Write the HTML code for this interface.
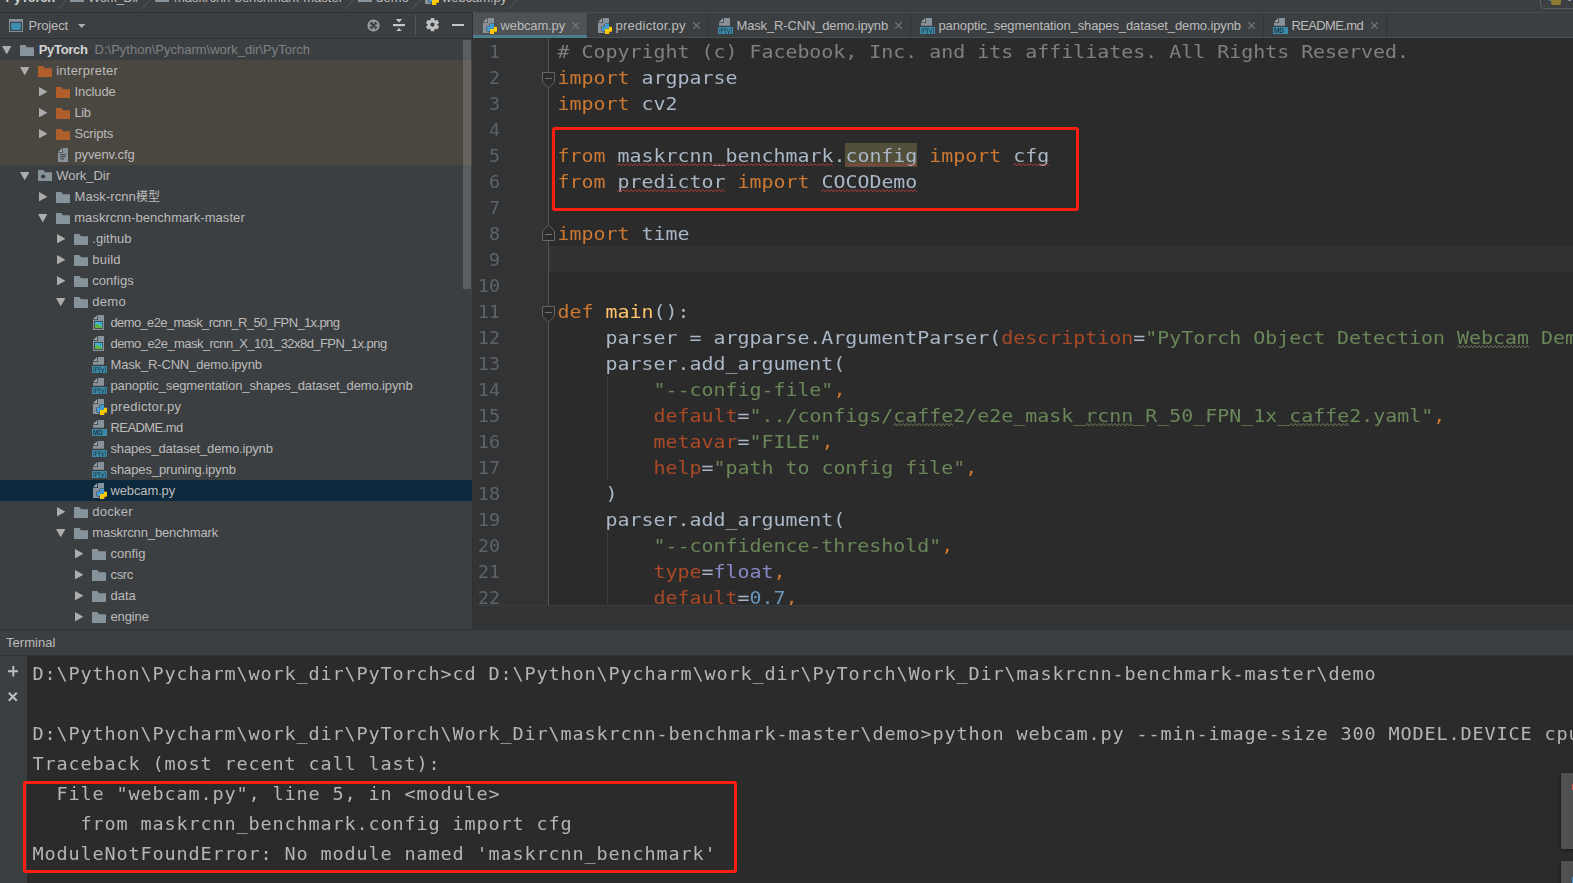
<!DOCTYPE html>
<html lang="en"><head><meta charset="utf-8"><title>PyCharm - webcam.py</title>
<style>
*{box-sizing:border-box}
html,body{margin:0;padding:0}
body{width:1573px;height:883px;overflow:hidden;background:#3c3f41;position:relative;font-family:"Liberation Sans", "Noto Sans CJK SC", sans-serif;font-size:13px;color:#bbbbbb;line-height:21px}
.abs{position:absolute}
.t{position:absolute;white-space:pre;}
.ic{position:absolute;display:block}
#top{position:absolute;left:0;top:0;width:1573px;height:12px;background:#3c3f41;overflow:hidden}
#proj{position:absolute;left:0;top:13px;width:472px;height:616px;background:#3c3f41;overflow:hidden}
.row{position:absolute;left:0;width:472px;height:21px}
.arr{position:absolute;display:block}
#tabs{position:absolute;left:472px;top:13px;width:1101px;height:25px;background:#3c3f41;overflow:hidden}
#ed{position:absolute;left:472px;top:38px;width:1101px;height:567px;background:#2b2b2b;overflow:hidden}
#gut{position:absolute;left:0;top:0;width:76px;height:567px;background:#313335}
.ln{position:absolute;left:0;width:28px;text-align:right;color:#606366}
.code{font-family:"DejaVu Sans Mono","Liberation Mono",monospace;font-size:19.93px;line-height:26px;white-space:pre;color:#a9b7c6}
.cl{transform:scaleY(0.89);transform-origin:0 19.9px}
.ln{transform:scale(0.92,0.89);transform-origin:100% 19.9px}
.cl{position:absolute;left:85.5px;height:26px}
.k{color:#cc7832} .c{color:#808080} .s{color:#6a8759} .n{color:#6897bb} .p{color:#aa4926} .b{color:#8888c6} .f{color:#ffc66d}
.gs{will-change:transform}
#crumb{position:absolute;left:472px;top:605px;width:1101px;height:24px;background:#313335}
#term{position:absolute;left:0;top:629px;width:1573px;height:254px;background:#2b2b2b;overflow:hidden}
.tl{position:absolute;left:32.5px;font-family:"DejaVu Sans Mono","Liberation Mono",monospace;font-size:18.5px;letter-spacing:0.862px;line-height:30px;height:30px;white-space:pre;color:#b5b5b5}
</style></head>
<body>
<div id="top"><span class="t" style="left:5.5px;top:-10px;line-height:15px;font-weight:bold;color:#cfcfcf;"><span style="letter-spacing:-0.223px">PyTorch</span></span><svg class="ic" style="left:56.7px;top:-3.4px" width="13" height="12" viewBox="0 0 13 12"><path d="M12.5 0L0.5 12" stroke="#56595b" stroke-width="1" fill="none"/></svg><svg class="ic" style="left:140.7px;top:-3.4px" width="13" height="12" viewBox="0 0 13 12"><path d="M12.5 0L0.5 12" stroke="#56595b" stroke-width="1" fill="none"/></svg><svg class="ic" style="left:344.2px;top:-3.4px" width="13" height="12" viewBox="0 0 13 12"><path d="M12.5 0L0.5 12" stroke="#56595b" stroke-width="1" fill="none"/></svg><svg class="ic" style="left:410.7px;top:-3.4px" width="13" height="12" viewBox="0 0 13 12"><path d="M12.5 0L0.5 12" stroke="#56595b" stroke-width="1" fill="none"/></svg><svg class="ic" style="left:508.2px;top:-3.4px" width="13" height="12" viewBox="0 0 13 12"><path d="M12.5 0L0.5 12" stroke="#56595b" stroke-width="1" fill="none"/></svg><svg class="ic" style="left:69.5px;top:-9px" width="14" height="11" viewBox="0 0 14 11"><path d="M0 0h5.2l1.6 2H14v9H0z" fill="#87939a"/></svg><svg class="ic" style="left:155px;top:-9px" width="14" height="11" viewBox="0 0 14 11"><path d="M0 0h5.2l1.6 2H14v9H0z" fill="#87939a"/></svg><svg class="ic" style="left:358px;top:-9px" width="14" height="11" viewBox="0 0 14 11"><path d="M0 0h5.2l1.6 2H14v9H0z" fill="#87939a"/></svg><span class="t" style="left:88px;top:-10px;line-height:15px;"><span style="letter-spacing:-0.367px">Work_Dir</span></span><span class="t" style="left:174px;top:-10px;line-height:15px;"><span style="letter-spacing:-0.002px">maskrcnn-benchmark-master</span></span><span class="t" style="left:376px;top:-10px;line-height:15px;"><span style="letter-spacing:0.117px">demo</span></span><span class="abs" style="left:425px;top:-11.5px;width:15px;height:16px"><svg class="ic" width="14" height="16.2" viewBox="0 0 14 16.2"><path d="M5.0 0H11V15H0V5.0H5.0z" fill="#87929a"/><path d="M0 4.2L4.2 0V4.2z" fill="#9ba5ab"/><path d="M7.6 5.8H10.3Q11 5.8 11 6.5V10Q11 10.7 10.3 10.7H7.7Q7 10.7 7 11.4V12.2Q7 12.85 6.3 12.85H4.7Q4 12.85 4 12.15V9.5Q4 8.8 4.7 8.8H7V8.3H7V6.5Q7 5.8 7.6 5.8z" fill="#3f9fd6" stroke="#3a4044" stroke-width="1.2" paint-order="stroke"/><path d="M11 8.8H13.3Q14 8.8 14 9.5V13Q14 13.7 13.3 13.7H11.3V15.4Q11.3 16.1 10.6 16.1H7.7Q7 16.1 7 15.4V11.4Q7 10.7 7.7 10.7H10.3Q11 10.7 11 10z" fill="#ffcc00" stroke="#3a4044" stroke-width="1.2" paint-order="stroke"/><path d="M7.6 5.8H10.3Q11 5.8 11 6.5V10Q11 10.7 10.3 10.7H7.7Q7 10.7 7 11.4V12.2Q7 12.85 6.3 12.85H4.7Q4 12.85 4 12.15V9.5Q4 8.8 4.7 8.8H7V8.3H7V6.5Q7 5.8 7.6 5.8z" fill="#3f9fd6"/><circle cx="8.4" cy="7.1" r="0.45" fill="#2a6e98"/><circle cx="9.9" cy="14.7" r="0.45" fill="#b38f00"/></svg></span><span class="t" style="left:442px;top:-10px;line-height:15px;"><span style="letter-spacing:-0.083px">webcam.py</span></span><div class="abs" style="left:1539.5px;top:-14px;width:60px;height:22.5px;border:1px solid #5a5d5f;border-radius:4px;background:#3c3f41"></div><div class="abs" style="left:1548px;top:-2px;width:10px;height:3px;background:#3d7fa8;border-radius:0 0 0 2px"></div><div class="abs" style="left:1551px;top:0px;width:10px;height:5px;background:#8c7a30;border-radius:0 0 2px 2px"></div><span class="t" style="left:1567px;top:-11px;line-height:15px;color:#cfd2d4">w</span></div>
<div class="abs" style="left:0;top:12px;width:472px;height:1px;background:#2f3133"></div><div class="abs" style="left:472px;top:12px;width:1101px;height:1px;background:#474b4d"></div>
<div id="proj"><svg class="ic" style="left:9px;top:6px" width="14" height="13" viewBox="0 0 14 13"><rect x="0" y="0" width="14" height="13" fill="#87939a"/><rect x="1" y="2.8" width="12" height="9.2" fill="#3c3f41"/><rect x="2.1" y="3.9" width="9.8" height="7.1" fill="#3c8eb0"/></svg><span class="t" style="left:28.5px;top:2px;line-height:21px"><span style="letter-spacing:-0.138px">Project</span></span><svg class="ic" style="left:78px;top:11px" width="7.4" height="4" viewBox="0 0 7.4 4"><path d="M0 0h7.4L3.7 4z" fill="#adadad"/></svg><svg class="ic" style="left:366.5px;top:5.5px" width="13" height="13" viewBox="0 0 13 13"><circle cx="6.5" cy="6.5" r="5.2" fill="none" stroke="#9c9ea0" stroke-width="1.8"/><path d="M6.5 1v3.6M6.5 8.4V12M1 6.5h3.6M8.4 6.5H12" stroke="#9c9ea0" stroke-width="2"/></svg><svg class="ic" style="left:393px;top:6px" width="12" height="12.4" viewBox="0 0 12 12.4"><rect x="0" y="5" width="12" height="2.2" fill="#c4c4c4"/><path d="M2.8 0h6.4L6 3.4z" fill="#c4c4c4"/><path d="M2.8 12.4h6.4L6 9z" fill="#c4c4c4"/></svg><div class="abs" style="left:415px;top:2px;width:1px;height:20px;background:#555759"></div><svg class="ic" style="left:425.5px;top:5.3px" width="13" height="13.4" viewBox="-6.5 -6.7 13 13.4"><g fill="#c0c0c0"><circle r="4.9"/><rect x="-1.9" y="-6.6" width="3.8" height="3.4" rx="0.7" transform="rotate(0)"/><rect x="-1.9" y="-6.6" width="3.8" height="3.4" rx="0.7" transform="rotate(60)"/><rect x="-1.9" y="-6.6" width="3.8" height="3.4" rx="0.7" transform="rotate(120)"/><rect x="-1.9" y="-6.6" width="3.8" height="3.4" rx="0.7" transform="rotate(180)"/><rect x="-1.9" y="-6.6" width="3.8" height="3.4" rx="0.7" transform="rotate(240)"/><rect x="-1.9" y="-6.6" width="3.8" height="3.4" rx="0.7" transform="rotate(300)"/></g><circle r="2.1" fill="#3c3f41"/></svg><div class="abs" style="left:452px;top:10.9px;width:12.2px;height:2.3px;background:#c4c4c4"></div><div class="abs" style="left:0;top:25px;width:472px;height:1px;background:#2f3133"></div><div class="abs" style="left:0;top:47px;width:472px;height:105px;background:#4a4740"></div><div class="abs" style="left:0;top:467px;width:472px;height:21px;background:#0d293e"></div><div class="row" style="top:26px"><svg class="arr" style="left:1.8px;top:6.6px" width="9.4" height="8.4" viewBox="0 0 9.4 8.4"><path d="M0 0h9.4L4.7 8.4z" fill="#adadad"/></svg><span class="abs" style="left:20px;top:5.5px"><svg class="ic" width="14" height="11" viewBox="0 0 14 11"><path d="M0 0h5.3l1.7 2.3H14V11H0z" fill="#87939a"/></svg></span><span class="t" style="left:38.75px;top:0;font-weight:bold;color:#d4d4d4;"><span style="letter-spacing:-0.33px">PyTorch</span></span><span class="t" style="left:94.5px;top:0;color:#7f8183"><span style="letter-spacing:0.006px">D:\Python\Pycharm\work_dir\PyTorch</span></span></div><div class="row" style="top:47px"><svg class="arr" style="left:19.8px;top:6.6px" width="9.4" height="8.4" viewBox="0 0 9.4 8.4"><path d="M0 0h9.4L4.7 8.4z" fill="#adadad"/></svg><span class="abs" style="left:38px;top:5.5px"><svg class="ic" width="14" height="11" viewBox="0 0 14 11"><path d="M0 0h5.3l1.7 2.3H14V11H0z" fill="#b15e2d"/></svg></span><span class="t" style="left:56.25px;top:0;"><span style="letter-spacing:0.227px">interpreter</span></span></div><div class="row" style="top:68px"><svg class="arr" style="left:38.8px;top:5.8px" width="8.4" height="9.4" viewBox="0 0 8.4 9.4"><path d="M0 0L8.4 4.7 0 9.4z" fill="#adadad"/></svg><span class="abs" style="left:56px;top:5.5px"><svg class="ic" width="14" height="11" viewBox="0 0 14 11"><path d="M0 0h5.3l1.7 2.3H14V11H0z" fill="#b15e2d"/></svg></span><span class="t" style="left:74.5px;top:0;"><span style="letter-spacing:-0.096px">Include</span></span></div><div class="row" style="top:89px"><svg class="arr" style="left:38.8px;top:5.8px" width="8.4" height="9.4" viewBox="0 0 8.4 9.4"><path d="M0 0L8.4 4.7 0 9.4z" fill="#adadad"/></svg><span class="abs" style="left:56px;top:5.5px"><svg class="ic" width="14" height="11" viewBox="0 0 14 11"><path d="M0 0h5.3l1.7 2.3H14V11H0z" fill="#b15e2d"/></svg></span><span class="t" style="left:74.5px;top:0;"><span style="letter-spacing:-0.453px">Lib</span></span></div><div class="row" style="top:110px"><svg class="arr" style="left:38.8px;top:5.8px" width="8.4" height="9.4" viewBox="0 0 8.4 9.4"><path d="M0 0L8.4 4.7 0 9.4z" fill="#adadad"/></svg><span class="abs" style="left:56px;top:5.5px"><svg class="ic" width="14" height="11" viewBox="0 0 14 11"><path d="M0 0h5.3l1.7 2.3H14V11H0z" fill="#b15e2d"/></svg></span><span class="t" style="left:74.5px;top:0;"><span style="letter-spacing:-0.176px">Scripts</span></span></div><div class="row" style="top:131px"><span class="abs" style="left:58px;top:4px"><svg class="ic" width="10" height="14" viewBox="0 0 10 14"><path d="M5.0 0H10V14H0V5.0H5.0z" fill="#87929a"/><path d="M0 4.2L4.2 0V4.2z" fill="#9ba5ab"/><path d="M2 6.6h6M2 8.7h6M2 10.9h4" stroke="#3c3f41" stroke-width="1"/></svg></span><span class="t" style="left:74.5px;top:0;"><span style="letter-spacing:-0.119px">pyvenv.cfg</span></span></div><div class="row" style="top:152px"><svg class="arr" style="left:19.8px;top:6.6px" width="9.4" height="8.4" viewBox="0 0 9.4 8.4"><path d="M0 0h9.4L4.7 8.4z" fill="#adadad"/></svg><span class="abs" style="left:38px;top:4.9px"><svg class="ic" width="14" height="11" viewBox="0 0 14 11"><path d="M0 0h5.3l1.7 2.3H14V11H0z" fill="#87939a"/><ellipse cx="5.1" cy="6.4" rx="2.2" ry="2" fill="#3c3f41"/></svg></span><span class="t" style="left:56.25px;top:0;"><span style="letter-spacing:-0.023px">Work_Dir</span></span></div><div class="row" style="top:173px"><svg class="arr" style="left:38.8px;top:5.8px" width="8.4" height="9.4" viewBox="0 0 8.4 9.4"><path d="M0 0L8.4 4.7 0 9.4z" fill="#adadad"/></svg><span class="abs" style="left:56px;top:5.5px"><svg class="ic" width="14" height="11" viewBox="0 0 14 11"><path d="M0 0h5.3l1.7 2.3H14V11H0z" fill="#87939a"/></svg></span><span class="t" style="left:74.5px;top:0;"><span style="letter-spacing:0.079px">Mask-rcnn</span><span style="font-size:12px">模型</span></span></div><div class="row" style="top:194px"><svg class="arr" style="left:37.8px;top:6.6px" width="9.4" height="8.4" viewBox="0 0 9.4 8.4"><path d="M0 0h9.4L4.7 8.4z" fill="#adadad"/></svg><span class="abs" style="left:56px;top:5.5px"><svg class="ic" width="14" height="11" viewBox="0 0 14 11"><path d="M0 0h5.3l1.7 2.3H14V11H0z" fill="#87939a"/></svg></span><span class="t" style="left:74.2px;top:0;"><span style="letter-spacing:0.062px">maskrcnn-benchmark-master</span></span></div><div class="row" style="top:215px"><svg class="arr" style="left:56.8px;top:5.8px" width="8.4" height="9.4" viewBox="0 0 8.4 9.4"><path d="M0 0L8.4 4.7 0 9.4z" fill="#adadad"/></svg><span class="abs" style="left:74px;top:5.5px"><svg class="ic" width="14" height="11" viewBox="0 0 14 11"><path d="M0 0h5.3l1.7 2.3H14V11H0z" fill="#87939a"/></svg></span><span class="t" style="left:92.3px;top:0;"><span style="letter-spacing:0.022px">.github</span></span></div><div class="row" style="top:236px"><svg class="arr" style="left:56.8px;top:5.8px" width="8.4" height="9.4" viewBox="0 0 8.4 9.4"><path d="M0 0L8.4 4.7 0 9.4z" fill="#adadad"/></svg><span class="abs" style="left:74px;top:5.5px"><svg class="ic" width="14" height="11" viewBox="0 0 14 11"><path d="M0 0h5.3l1.7 2.3H14V11H0z" fill="#87939a"/></svg></span><span class="t" style="left:92.3px;top:0;"><span style="letter-spacing:0.206px">build</span></span></div><div class="row" style="top:257px"><svg class="arr" style="left:56.8px;top:5.8px" width="8.4" height="9.4" viewBox="0 0 8.4 9.4"><path d="M0 0L8.4 4.7 0 9.4z" fill="#adadad"/></svg><span class="abs" style="left:74px;top:5.5px"><svg class="ic" width="14" height="11" viewBox="0 0 14 11"><path d="M0 0h5.3l1.7 2.3H14V11H0z" fill="#87939a"/></svg></span><span class="t" style="left:92.3px;top:0;"><span style="letter-spacing:0.028px">configs</span></span></div><div class="row" style="top:278px"><svg class="arr" style="left:55.8px;top:6.6px" width="9.4" height="8.4" viewBox="0 0 9.4 8.4"><path d="M0 0h9.4L4.7 8.4z" fill="#adadad"/></svg><span class="abs" style="left:74px;top:5.5px"><svg class="ic" width="14" height="11" viewBox="0 0 14 11"><path d="M0 0h5.3l1.7 2.3H14V11H0z" fill="#87939a"/></svg></span><span class="t" style="left:92.3px;top:0;"><span style="letter-spacing:0.267px">demo</span></span></div><div class="row" style="top:299px"><span class="abs" style="left:93px;top:3px"><svg class="ic" width="11" height="15" viewBox="0 0 11 15"><path d="M5.0 0H11V15H0V5.0H5.0z" fill="#87929a"/><path d="M0 4.2L4.2 0V4.2z" fill="#9ba5ab"/><rect x="1.2" y="6.1" width="8.7" height="7.6" fill="#35383a"/><rect x="2" y="6.9" width="7.3" height="6.1" fill="#40b6e0"/><path d="M2 13v-2.6c1-1.3 2.3-1.7 3.4-.9 1.300000000000001.9 2.6 1.7 3.9 2.3V13z" fill="#62b543"/><circle cx="7.5" cy="8.4" r="0.65" fill="#2f6f8c"/></svg></span><span class="t" style="left:110.5px;top:0;"><span style="letter-spacing:-0.625px">demo_e2e_mask_rcnn_R_50_FPN_1x.png</span></span></div><div class="row" style="top:320px"><span class="abs" style="left:93px;top:3px"><svg class="ic" width="11" height="15" viewBox="0 0 11 15"><path d="M5.0 0H11V15H0V5.0H5.0z" fill="#87929a"/><path d="M0 4.2L4.2 0V4.2z" fill="#9ba5ab"/><rect x="1.2" y="6.1" width="8.7" height="7.6" fill="#35383a"/><rect x="2" y="6.9" width="7.3" height="6.1" fill="#40b6e0"/><path d="M2 13v-2.6c1-1.3 2.3-1.7 3.4-.9 1.300000000000001.9 2.6 1.7 3.9 2.3V13z" fill="#62b543"/><circle cx="7.5" cy="8.4" r="0.65" fill="#2f6f8c"/></svg></span><span class="t" style="left:110.5px;top:0;"><span style="letter-spacing:-0.564px">demo_e2e_mask_rcnn_X_101_32x8d_FPN_1x.png</span></span></div><div class="row" style="top:341px"><span class="abs" style="left:92px;top:3px"><svg class="ic gs" width="15" height="16.2" viewBox="0 0 15 16.2"><g transform="translate(1,0)"><path d="M5.0 0H11V7.8H0V5.0H5.0z" fill="#87929a"/><path d="M0 4.2L4.2 0V4.2z" fill="#9ba5ab"/></g><rect x="0" y="9" width="15" height="7.1" fill="#3d89a8"/><text x="7.5" y="15.2" font-family="Liberation Sans, sans-serif" font-size="7" text-anchor="middle" fill="#1d3440" textLength="13" lengthAdjust="spacingAndGlyphs">IP[y]</text></svg></span><span class="t" style="left:110.5px;top:0;"><span style="letter-spacing:-0.158px">Mask_R-CNN_demo.ipynb</span></span></div><div class="row" style="top:362px"><span class="abs" style="left:92px;top:3px"><svg class="ic gs" width="15" height="16.2" viewBox="0 0 15 16.2"><g transform="translate(1,0)"><path d="M5.0 0H11V7.8H0V5.0H5.0z" fill="#87929a"/><path d="M0 4.2L4.2 0V4.2z" fill="#9ba5ab"/></g><rect x="0" y="9" width="15" height="7.1" fill="#3d89a8"/><text x="7.5" y="15.2" font-family="Liberation Sans, sans-serif" font-size="7" text-anchor="middle" fill="#1d3440" textLength="13" lengthAdjust="spacingAndGlyphs">IP[y]</text></svg></span><span class="t" style="left:110.5px;top:0;"><span style="letter-spacing:-0.124px">panoptic_segmentation_shapes_dataset_demo.ipynb</span></span></div><div class="row" style="top:383px"><span class="abs" style="left:93px;top:3px"><svg class="ic" width="14" height="16.2" viewBox="0 0 14 16.2"><path d="M5.0 0H11V15H0V5.0H5.0z" fill="#87929a"/><path d="M0 4.2L4.2 0V4.2z" fill="#9ba5ab"/><path d="M7.6 5.8H10.3Q11 5.8 11 6.5V10Q11 10.7 10.3 10.7H7.7Q7 10.7 7 11.4V12.2Q7 12.85 6.3 12.85H4.7Q4 12.85 4 12.15V9.5Q4 8.8 4.7 8.8H7V8.3H7V6.5Q7 5.8 7.6 5.8z" fill="#3f9fd6" stroke="#3a4044" stroke-width="1.2" paint-order="stroke"/><path d="M11 8.8H13.3Q14 8.8 14 9.5V13Q14 13.7 13.3 13.7H11.3V15.4Q11.3 16.1 10.6 16.1H7.7Q7 16.1 7 15.4V11.4Q7 10.7 7.7 10.7H10.3Q11 10.7 11 10z" fill="#ffcc00" stroke="#3a4044" stroke-width="1.2" paint-order="stroke"/><path d="M7.6 5.8H10.3Q11 5.8 11 6.5V10Q11 10.7 10.3 10.7H7.7Q7 10.7 7 11.4V12.2Q7 12.85 6.3 12.85H4.7Q4 12.85 4 12.15V9.5Q4 8.8 4.7 8.8H7V8.3H7V6.5Q7 5.8 7.6 5.8z" fill="#3f9fd6"/><circle cx="8.4" cy="7.1" r="0.45" fill="#2a6e98"/><circle cx="9.9" cy="14.7" r="0.45" fill="#b38f00"/></svg></span><span class="t" style="left:110.5px;top:0;"><span style="letter-spacing:0.3px">predictor.py</span></span></div><div class="row" style="top:404px"><span class="abs" style="left:92px;top:3px"><svg class="ic gs" width="15" height="16.2" viewBox="0 0 15 16.2"><g transform="translate(1,0)"><path d="M5.0 0H11V7.8H0V5.0H5.0z" fill="#87929a"/><path d="M0 4.2L4.2 0V4.2z" fill="#9ba5ab"/></g><rect x="0" y="9" width="15" height="7.1" fill="#3d89a8"/><text x="6" y="15.2" font-family="Liberation Sans, sans-serif" font-size="6.6" font-weight="bold" text-anchor="middle" fill="#1d3440" textLength="10" lengthAdjust="spacingAndGlyphs">MD</text></svg></span><span class="t" style="left:110.5px;top:0;"><span style="letter-spacing:-0.566px">README.md</span></span></div><div class="row" style="top:425px"><span class="abs" style="left:92px;top:3px"><svg class="ic gs" width="15" height="16.2" viewBox="0 0 15 16.2"><g transform="translate(1,0)"><path d="M5.0 0H11V7.8H0V5.0H5.0z" fill="#87929a"/><path d="M0 4.2L4.2 0V4.2z" fill="#9ba5ab"/></g><rect x="0" y="9" width="15" height="7.1" fill="#3d89a8"/><text x="7.5" y="15.2" font-family="Liberation Sans, sans-serif" font-size="7" text-anchor="middle" fill="#1d3440" textLength="13" lengthAdjust="spacingAndGlyphs">IP[y]</text></svg></span><span class="t" style="left:110.5px;top:0;"><span style="letter-spacing:-0.161px">shapes_dataset_demo.ipynb</span></span></div><div class="row" style="top:446px"><span class="abs" style="left:92px;top:3px"><svg class="ic gs" width="15" height="16.2" viewBox="0 0 15 16.2"><g transform="translate(1,0)"><path d="M5.0 0H11V7.8H0V5.0H5.0z" fill="#87929a"/><path d="M0 4.2L4.2 0V4.2z" fill="#9ba5ab"/></g><rect x="0" y="9" width="15" height="7.1" fill="#3d89a8"/><text x="7.5" y="15.2" font-family="Liberation Sans, sans-serif" font-size="7" text-anchor="middle" fill="#1d3440" textLength="13" lengthAdjust="spacingAndGlyphs">IP[y]</text></svg></span><span class="t" style="left:110.5px;top:0;"><span style="letter-spacing:-0.096px">shapes_pruning.ipynb</span></span></div><div class="row" style="top:467px"><span class="abs" style="left:93px;top:3px"><svg class="ic" width="14" height="16.2" viewBox="0 0 14 16.2"><path d="M5.0 0H11V15H0V5.0H5.0z" fill="#87929a"/><path d="M0 4.2L4.2 0V4.2z" fill="#9ba5ab"/><path d="M7.6 5.8H10.3Q11 5.8 11 6.5V10Q11 10.7 10.3 10.7H7.7Q7 10.7 7 11.4V12.2Q7 12.85 6.3 12.85H4.7Q4 12.85 4 12.15V9.5Q4 8.8 4.7 8.8H7V8.3H7V6.5Q7 5.8 7.6 5.8z" fill="#3f9fd6" stroke="#3a4044" stroke-width="1.2" paint-order="stroke"/><path d="M11 8.8H13.3Q14 8.8 14 9.5V13Q14 13.7 13.3 13.7H11.3V15.4Q11.3 16.1 10.6 16.1H7.7Q7 16.1 7 15.4V11.4Q7 10.7 7.7 10.7H10.3Q11 10.7 11 10z" fill="#ffcc00" stroke="#3a4044" stroke-width="1.2" paint-order="stroke"/><path d="M7.6 5.8H10.3Q11 5.8 11 6.5V10Q11 10.7 10.3 10.7H7.7Q7 10.7 7 11.4V12.2Q7 12.85 6.3 12.85H4.7Q4 12.85 4 12.15V9.5Q4 8.8 4.7 8.8H7V8.3H7V6.5Q7 5.8 7.6 5.8z" fill="#3f9fd6"/><circle cx="8.4" cy="7.1" r="0.45" fill="#2a6e98"/><circle cx="9.9" cy="14.7" r="0.45" fill="#b38f00"/></svg></span><span class="t" style="left:110.5px;top:0;"><span style="letter-spacing:-0.128px">webcam.py</span></span></div><div class="row" style="top:488px"><svg class="arr" style="left:56.8px;top:5.8px" width="8.4" height="9.4" viewBox="0 0 8.4 9.4"><path d="M0 0L8.4 4.7 0 9.4z" fill="#adadad"/></svg><span class="abs" style="left:74px;top:5.5px"><svg class="ic" width="14" height="11" viewBox="0 0 14 11"><path d="M0 0h5.3l1.7 2.3H14V11H0z" fill="#87939a"/></svg></span><span class="t" style="left:92.3px;top:0;"><span style="letter-spacing:0.261px">docker</span></span></div><div class="row" style="top:509px"><svg class="arr" style="left:55.8px;top:6.6px" width="9.4" height="8.4" viewBox="0 0 9.4 8.4"><path d="M0 0h9.4L4.7 8.4z" fill="#adadad"/></svg><span class="abs" style="left:74px;top:5.5px"><svg class="ic" width="14" height="11" viewBox="0 0 14 11"><path d="M0 0h5.3l1.7 2.3H14V11H0z" fill="#87939a"/></svg></span><span class="t" style="left:92.3px;top:0;"><span style="letter-spacing:-0.111px">maskrcnn_benchmark</span></span></div><div class="row" style="top:530px"><svg class="arr" style="left:74.8px;top:5.8px" width="8.4" height="9.4" viewBox="0 0 8.4 9.4"><path d="M0 0L8.4 4.7 0 9.4z" fill="#adadad"/></svg><span class="abs" style="left:92px;top:5.5px"><svg class="ic" width="14" height="11" viewBox="0 0 14 11"><path d="M0 0h5.3l1.7 2.3H14V11H0z" fill="#87939a"/></svg></span><span class="t" style="left:110.5px;top:0;"><span style="letter-spacing:0.049px">config</span></span></div><div class="row" style="top:551px"><svg class="arr" style="left:74.8px;top:5.8px" width="8.4" height="9.4" viewBox="0 0 8.4 9.4"><path d="M0 0L8.4 4.7 0 9.4z" fill="#adadad"/></svg><span class="abs" style="left:92px;top:5.5px"><svg class="ic" width="14" height="11" viewBox="0 0 14 11"><path d="M0 0h5.3l1.7 2.3H14V11H0z" fill="#87939a"/></svg></span><span class="t" style="left:110.5px;top:0;"><span style="letter-spacing:-0.361px">csrc</span></span></div><div class="row" style="top:572px"><svg class="arr" style="left:74.8px;top:5.8px" width="8.4" height="9.4" viewBox="0 0 8.4 9.4"><path d="M0 0L8.4 4.7 0 9.4z" fill="#adadad"/></svg><span class="abs" style="left:92px;top:5.5px"><svg class="ic" width="14" height="11" viewBox="0 0 14 11"><path d="M0 0h5.3l1.7 2.3H14V11H0z" fill="#87939a"/></svg></span><span class="t" style="left:110.5px;top:0;"><span style="letter-spacing:-0.028px">data</span></span></div><div class="row" style="top:593px"><svg class="arr" style="left:74.8px;top:5.8px" width="8.4" height="9.4" viewBox="0 0 8.4 9.4"><path d="M0 0L8.4 4.7 0 9.4z" fill="#adadad"/></svg><span class="abs" style="left:92px;top:5.5px"><svg class="ic" width="14" height="11" viewBox="0 0 14 11"><path d="M0 0h5.3l1.7 2.3H14V11H0z" fill="#87939a"/></svg></span><span class="t" style="left:110.5px;top:0;"><span style="letter-spacing:-0.124px">engine</span></span></div><div class="abs" style="left:463px;top:27px;width:8px;height:248.5px;background:rgba(172,172,172,0.286)"></div></div>
<div class="abs" style="left:472px;top:13px;width:1px;height:616px;background:#2d2f31;z-index:3"></div>
<div id="tabs"><div class="abs" style="left:1px;top:0;width:114px;height:25px;background:#4e5254"></div><div class="abs" style="left:1px;top:22px;width:114px;height:3px;background:#4a7d8e"></div><div class="abs" style="left:115px;top:0;width:1px;height:25px;background:#323537"></div><span class="abs" style="left:11.199999999999989px;top:5px"><svg class="ic" width="14" height="16.2" viewBox="0 0 14 16.2"><path d="M5.0 0H11V15H0V5.0H5.0z" fill="#87929a"/><path d="M0 4.2L4.2 0V4.2z" fill="#9ba5ab"/><path d="M7.6 5.8H10.3Q11 5.8 11 6.5V10Q11 10.7 10.3 10.7H7.7Q7 10.7 7 11.4V12.2Q7 12.85 6.3 12.85H4.7Q4 12.85 4 12.15V9.5Q4 8.8 4.7 8.8H7V8.3H7V6.5Q7 5.8 7.6 5.8z" fill="#3f9fd6" stroke="#3a4044" stroke-width="1.2" paint-order="stroke"/><path d="M11 8.8H13.3Q14 8.8 14 9.5V13Q14 13.7 13.3 13.7H11.3V15.4Q11.3 16.1 10.6 16.1H7.7Q7 16.1 7 15.4V11.4Q7 10.7 7.7 10.7H10.3Q11 10.7 11 10z" fill="#ffcc00" stroke="#3a4044" stroke-width="1.2" paint-order="stroke"/><path d="M7.6 5.8H10.3Q11 5.8 11 6.5V10Q11 10.7 10.3 10.7H7.7Q7 10.7 7 11.4V12.2Q7 12.85 6.3 12.85H4.7Q4 12.85 4 12.15V9.5Q4 8.8 4.7 8.8H7V8.3H7V6.5Q7 5.8 7.6 5.8z" fill="#3f9fd6"/><circle cx="8.4" cy="7.1" r="0.45" fill="#2a6e98"/><circle cx="9.9" cy="14.7" r="0.45" fill="#b38f00"/></svg></span><span class="t" style="left:28.600000000000023px;top:2px;line-height:21px"><span style="letter-spacing:-0.15px">webcam.py</span></span><svg class="ic" style="left:99.79999999999995px;top:9px" width="7" height="7" viewBox="0 0 7 7"><path d="M0.3 0.3l6.4 6.4M6.7 0.3L0.3 6.7" stroke="#7a7d7f" stroke-width="1.1"/></svg><div class="abs" style="left:236px;top:0;width:1px;height:25px;background:#323537"></div><span class="abs" style="left:126px;top:5px"><svg class="ic" width="14" height="16.2" viewBox="0 0 14 16.2"><path d="M5.0 0H11V15H0V5.0H5.0z" fill="#87929a"/><path d="M0 4.2L4.2 0V4.2z" fill="#9ba5ab"/><path d="M7.6 5.8H10.3Q11 5.8 11 6.5V10Q11 10.7 10.3 10.7H7.7Q7 10.7 7 11.4V12.2Q7 12.85 6.3 12.85H4.7Q4 12.85 4 12.15V9.5Q4 8.8 4.7 8.8H7V8.3H7V6.5Q7 5.8 7.6 5.8z" fill="#3f9fd6" stroke="#3a4044" stroke-width="1.2" paint-order="stroke"/><path d="M11 8.8H13.3Q14 8.8 14 9.5V13Q14 13.7 13.3 13.7H11.3V15.4Q11.3 16.1 10.6 16.1H7.7Q7 16.1 7 15.4V11.4Q7 10.7 7.7 10.7H10.3Q11 10.7 11 10z" fill="#ffcc00" stroke="#3a4044" stroke-width="1.2" paint-order="stroke"/><path d="M7.6 5.8H10.3Q11 5.8 11 6.5V10Q11 10.7 10.3 10.7H7.7Q7 10.7 7 11.4V12.2Q7 12.85 6.3 12.85H4.7Q4 12.85 4 12.15V9.5Q4 8.8 4.7 8.8H7V8.3H7V6.5Q7 5.8 7.6 5.8z" fill="#3f9fd6"/><circle cx="8.4" cy="7.1" r="0.45" fill="#2a6e98"/><circle cx="9.9" cy="14.7" r="0.45" fill="#b38f00"/></svg></span><span class="t" style="left:143.5px;top:2px;line-height:21px"><span style="letter-spacing:0.25px">predictor.py</span></span><svg class="ic" style="left:221.0px;top:9px" width="7" height="7" viewBox="0 0 7 7"><path d="M0.3 0.3l6.4 6.4M6.7 0.3L0.3 6.7" stroke="#7a7d7f" stroke-width="1.1"/></svg><div class="abs" style="left:438px;top:0;width:1px;height:25px;background:#323537"></div><span class="abs" style="left:246px;top:5px"><svg class="ic gs" width="15" height="16.2" viewBox="0 0 15 16.2"><g transform="translate(1,0)"><path d="M5.0 0H11V7.8H0V5.0H5.0z" fill="#87929a"/><path d="M0 4.2L4.2 0V4.2z" fill="#9ba5ab"/></g><rect x="0" y="9" width="15" height="7.1" fill="#3d89a8"/><text x="7.5" y="15.2" font-family="Liberation Sans, sans-serif" font-size="7" text-anchor="middle" fill="#1d3440" textLength="13" lengthAdjust="spacingAndGlyphs">IP[y]</text></svg></span><span class="t" style="left:264.5px;top:2px;line-height:21px"><span style="letter-spacing:-0.149px">Mask_R-CNN_demo.ipynb</span></span><svg class="ic" style="left:423.0px;top:9px" width="7" height="7" viewBox="0 0 7 7"><path d="M0.3 0.3l6.4 6.4M6.7 0.3L0.3 6.7" stroke="#7a7d7f" stroke-width="1.1"/></svg><div class="abs" style="left:791px;top:0;width:1px;height:25px;background:#323537"></div><span class="abs" style="left:448px;top:5px"><svg class="ic gs" width="15" height="16.2" viewBox="0 0 15 16.2"><g transform="translate(1,0)"><path d="M5.0 0H11V7.8H0V5.0H5.0z" fill="#87929a"/><path d="M0 4.2L4.2 0V4.2z" fill="#9ba5ab"/></g><rect x="0" y="9" width="15" height="7.1" fill="#3d89a8"/><text x="7.5" y="15.2" font-family="Liberation Sans, sans-serif" font-size="7" text-anchor="middle" fill="#1d3440" textLength="13" lengthAdjust="spacingAndGlyphs">IP[y]</text></svg></span><span class="t" style="left:466.5px;top:2px;line-height:21px"><span style="letter-spacing:-0.115px">panoptic_segmentation_shapes_dataset_demo.ipynb</span></span><svg class="ic" style="left:776.0px;top:9px" width="7" height="7" viewBox="0 0 7 7"><path d="M0.3 0.3l6.4 6.4M6.7 0.3L0.3 6.7" stroke="#7a7d7f" stroke-width="1.1"/></svg><div class="abs" style="left:914px;top:0;width:1px;height:25px;background:#323537"></div><span class="abs" style="left:801px;top:5px"><svg class="ic gs" width="15" height="16.2" viewBox="0 0 15 16.2"><g transform="translate(1,0)"><path d="M5.0 0H11V7.8H0V5.0H5.0z" fill="#87929a"/><path d="M0 4.2L4.2 0V4.2z" fill="#9ba5ab"/></g><rect x="0" y="9" width="15" height="7.1" fill="#3d89a8"/><text x="6" y="15.2" font-family="Liberation Sans, sans-serif" font-size="6.6" font-weight="bold" text-anchor="middle" fill="#1d3440" textLength="10" lengthAdjust="spacingAndGlyphs">MD</text></svg></span><span class="t" style="left:819.5px;top:2px;line-height:21px"><span style="letter-spacing:-0.644px">README.md</span></span><svg class="ic" style="left:899.0px;top:9px" width="7" height="7" viewBox="0 0 7 7"><path d="M0.3 0.3l6.4 6.4M6.7 0.3L0.3 6.7" stroke="#7a7d7f" stroke-width="1.1"/></svg><div class="abs" style="left:115px;top:24px;width:986px;height:1px;background:#4b4e50"></div></div>
<div id="ed" class="code"><div id="gut"></div><div class="abs" style="left:76px;top:0;width:1px;height:567px;background:#555555"></div><div class="abs" style="left:77px;top:208px;width:1024px;height:26px;background:#323232"></div><div class="abs" style="left:135px;top:338px;width:1px;height:104px;background:#3a3a3a"></div><div class="abs" style="left:135px;top:494px;width:1px;height:80px;background:#3a3a3a"></div><div class="abs" style="left:373px;top:104.5px;width:72px;height:24px;background:#52503a"></div><div class="gs abs" style="left:0;top:0;width:1101px;height:567px"><div class="ln" style="top:1.1px">1</div><div class="ln" style="top:27.1px">2</div><div class="ln" style="top:53.1px">3</div><div class="ln" style="top:79.1px">4</div><div class="ln" style="top:105.1px">5</div><div class="ln" style="top:131.1px">6</div><div class="ln" style="top:157.1px">7</div><div class="ln" style="top:183.1px">8</div><div class="ln" style="top:209.1px">9</div><div class="ln" style="top:235.1px">10</div><div class="ln" style="top:261.1px">11</div><div class="ln" style="top:287.1px">12</div><div class="ln" style="top:313.1px">13</div><div class="ln" style="top:339.1px">14</div><div class="ln" style="top:365.1px">15</div><div class="ln" style="top:391.1px">16</div><div class="ln" style="top:417.1px">17</div><div class="ln" style="top:443.1px">18</div><div class="ln" style="top:469.1px">19</div><div class="ln" style="top:495.1px">20</div><div class="ln" style="top:521.1px">21</div><div class="ln" style="top:547.1px">22</div><div class="cl" style="top:1.1px"><span class="c"># Copyright (c) Facebook, Inc. and its affiliates. All Rights Reserved.</span></div><div class="cl" style="top:27.1px"><span class="k">import</span> argparse</div><div class="cl" style="top:53.1px"><span class="k">import</span> cv2</div><div class="cl" style="top:105.1px"><span class="k">from</span> <span class="w">maskrcnn_benchmark</span>.<span class="w">config</span> <span class="k">import</span> <span class="w">cfg</span></div><div class="cl" style="top:131.1px"><span class="k">from</span> <span class="w">predictor</span> <span class="k">import</span> <span class="w">COCODemo</span></div><div class="cl" style="top:183.1px"><span class="k">import</span> time</div><div class="cl" style="top:261.1px"><span class="k">def</span> <span class="f">main</span>():</div><div class="cl" style="top:287.1px">    parser = argparse.ArgumentParser(<span class="p">description</span>=<span class="s">"PyTorch Object Detection <span class="wg">Webcam</span> Demo"</span>)</div><div class="cl" style="top:313.1px">    parser.add_argument(</div><div class="cl" style="top:339.1px">        <span class="s">"--config-file"</span><span class="k">,</span></div><div class="cl" style="top:365.1px">        <span class="p">default</span>=<span class="s">"../configs/<span class="wg">caffe</span>2/e2e_mask_<span class="wg">rcnn</span>_R_50_FPN_1x_<span class="wg">caffe</span>2.yaml"</span><span class="k">,</span></div><div class="cl" style="top:391.1px">        <span class="p">metavar</span>=<span class="s">"FILE"</span><span class="k">,</span></div><div class="cl" style="top:417.1px">        <span class="p">help</span>=<span class="s">"path to config file"</span><span class="k">,</span></div><div class="cl" style="top:443.1px">    )</div><div class="cl" style="top:469.1px">    parser.add_argument(</div><div class="cl" style="top:495.1px">        <span class="s">"--confidence-threshold"</span><span class="k">,</span></div><div class="cl" style="top:521.1px">        <span class="p">type</span>=<span class="b">float</span><span class="k">,</span></div><div class="cl" style="top:547.1px">        <span class="p">default</span>=<span class="n">0.7</span><span class="k">,</span></div></div><svg class="ic" style="left:145.0px;top:125.0px" width="217" height="3.4" viewBox="0 0 217 3.4"><polyline points="0,2.9 2,0.5 4,2.9 6,0.5 8,2.9 10,0.5 12,2.9 14,0.5 16,2.9 18,0.5 20,2.9 22,0.5 24,2.9 26,0.5 28,2.9 30,0.5 32,2.9 34,0.5 36,2.9 38,0.5 40,2.9 42,0.5 44,2.9 46,0.5 48,2.9 50,0.5 52,2.9 54,0.5 56,2.9 58,0.5 60,2.9 62,0.5 64,2.9 66,0.5 68,2.9 70,0.5 72,2.9 74,0.5 76,2.9 78,0.5 80,2.9 82,0.5 84,2.9 86,0.5 88,2.9 90,0.5 92,2.9 94,0.5 96,2.9 98,0.5 100,2.9 102,0.5 104,2.9 106,0.5 108,2.9 110,0.5 112,2.9 114,0.5 116,2.9 118,0.5 120,2.9 122,0.5 124,2.9 126,0.5 128,2.9 130,0.5 132,2.9 134,0.5 136,2.9 138,0.5 140,2.9 142,0.5 144,2.9 146,0.5 148,2.9 150,0.5 152,2.9 154,0.5 156,2.9 158,0.5 160,2.9 162,0.5 164,2.9 166,0.5 168,2.9 170,0.5 172,2.9 174,0.5 176,2.9 178,0.5 180,2.9 182,0.5 184,2.9 186,0.5 188,2.9 190,0.5 192,2.9 194,0.5 196,2.9 198,0.5 200,2.9 202,0.5 204,2.9 206,0.5 208,2.9 210,0.5 212,2.9 214,0.5 216,2.9" fill="none" stroke="#b0403c" stroke-width="0.9"/></svg><svg class="ic" style="left:373.0px;top:125.0px" width="73" height="3.4" viewBox="0 0 73 3.4"><polyline points="0,2.9 2,0.5 4,2.9 6,0.5 8,2.9 10,0.5 12,2.9 14,0.5 16,2.9 18,0.5 20,2.9 22,0.5 24,2.9 26,0.5 28,2.9 30,0.5 32,2.9 34,0.5 36,2.9 38,0.5 40,2.9 42,0.5 44,2.9 46,0.5 48,2.9 50,0.5 52,2.9 54,0.5 56,2.9 58,0.5 60,2.9 62,0.5 64,2.9 66,0.5 68,2.9 70,0.5 72,2.9" fill="none" stroke="#b0403c" stroke-width="0.9"/></svg><svg class="ic" style="left:541.0px;top:125.0px" width="37" height="3.4" viewBox="0 0 37 3.4"><polyline points="0,2.9 2,0.5 4,2.9 6,0.5 8,2.9 10,0.5 12,2.9 14,0.5 16,2.9 18,0.5 20,2.9 22,0.5 24,2.9 26,0.5 28,2.9 30,0.5 32,2.9 34,0.5 36,2.9" fill="none" stroke="#b0403c" stroke-width="0.9"/></svg><svg class="ic" style="left:145.0px;top:151.0px" width="109" height="3.4" viewBox="0 0 109 3.4"><polyline points="0,2.9 2,0.5 4,2.9 6,0.5 8,2.9 10,0.5 12,2.9 14,0.5 16,2.9 18,0.5 20,2.9 22,0.5 24,2.9 26,0.5 28,2.9 30,0.5 32,2.9 34,0.5 36,2.9 38,0.5 40,2.9 42,0.5 44,2.9 46,0.5 48,2.9 50,0.5 52,2.9 54,0.5 56,2.9 58,0.5 60,2.9 62,0.5 64,2.9 66,0.5 68,2.9 70,0.5 72,2.9 74,0.5 76,2.9 78,0.5 80,2.9 82,0.5 84,2.9 86,0.5 88,2.9 90,0.5 92,2.9 94,0.5 96,2.9 98,0.5 100,2.9 102,0.5 104,2.9 106,0.5 108,2.9" fill="none" stroke="#b0403c" stroke-width="0.9"/></svg><svg class="ic" style="left:349.0px;top:151.0px" width="97" height="3.4" viewBox="0 0 97 3.4"><polyline points="0,2.9 2,0.5 4,2.9 6,0.5 8,2.9 10,0.5 12,2.9 14,0.5 16,2.9 18,0.5 20,2.9 22,0.5 24,2.9 26,0.5 28,2.9 30,0.5 32,2.9 34,0.5 36,2.9 38,0.5 40,2.9 42,0.5 44,2.9 46,0.5 48,2.9 50,0.5 52,2.9 54,0.5 56,2.9 58,0.5 60,2.9 62,0.5 64,2.9 66,0.5 68,2.9 70,0.5 72,2.9 74,0.5 76,2.9 78,0.5 80,2.9 82,0.5 84,2.9 86,0.5 88,2.9 90,0.5 92,2.9 94,0.5 96,2.9" fill="none" stroke="#b0403c" stroke-width="0.9"/></svg><svg class="ic" style="left:985.0px;top:307.0px" width="73" height="3.4" viewBox="0 0 73 3.4"><polyline points="0,2.9 2,0.5 4,2.9 6,0.5 8,2.9 10,0.5 12,2.9 14,0.5 16,2.9 18,0.5 20,2.9 22,0.5 24,2.9 26,0.5 28,2.9 30,0.5 32,2.9 34,0.5 36,2.9 38,0.5 40,2.9 42,0.5 44,2.9 46,0.5 48,2.9 50,0.5 52,2.9 54,0.5 56,2.9 58,0.5 60,2.9 62,0.5 64,2.9 66,0.5 68,2.9 70,0.5 72,2.9" fill="none" stroke="#6f7f62" stroke-width="0.9"/></svg><svg class="ic" style="left:421.0px;top:385.0px" width="61" height="3.4" viewBox="0 0 61 3.4"><polyline points="0,2.9 2,0.5 4,2.9 6,0.5 8,2.9 10,0.5 12,2.9 14,0.5 16,2.9 18,0.5 20,2.9 22,0.5 24,2.9 26,0.5 28,2.9 30,0.5 32,2.9 34,0.5 36,2.9 38,0.5 40,2.9 42,0.5 44,2.9 46,0.5 48,2.9 50,0.5 52,2.9 54,0.5 56,2.9 58,0.5 60,2.9" fill="none" stroke="#6f7f62" stroke-width="0.9"/></svg><svg class="ic" style="left:613.0px;top:385.0px" width="49" height="3.4" viewBox="0 0 49 3.4"><polyline points="0,2.9 2,0.5 4,2.9 6,0.5 8,2.9 10,0.5 12,2.9 14,0.5 16,2.9 18,0.5 20,2.9 22,0.5 24,2.9 26,0.5 28,2.9 30,0.5 32,2.9 34,0.5 36,2.9 38,0.5 40,2.9 42,0.5 44,2.9 46,0.5 48,2.9" fill="none" stroke="#6f7f62" stroke-width="0.9"/></svg><svg class="ic" style="left:817.0px;top:385.0px" width="61" height="3.4" viewBox="0 0 61 3.4"><polyline points="0,2.9 2,0.5 4,2.9 6,0.5 8,2.9 10,0.5 12,2.9 14,0.5 16,2.9 18,0.5 20,2.9 22,0.5 24,2.9 26,0.5 28,2.9 30,0.5 32,2.9 34,0.5 36,2.9 38,0.5 40,2.9 42,0.5 44,2.9 46,0.5 48,2.9 50,0.5 52,2.9 54,0.5 56,2.9 58,0.5 60,2.9" fill="none" stroke="#6f7f62" stroke-width="0.9"/></svg><svg class="ic" style="left:70px;top:34px" width="13" height="17" viewBox="0 0 13 17"><path d="M0.5 0.5h12v9.7L6.5 16 0.5 10.2z" fill="#2b2b2b" stroke="#636567" stroke-width="1"/><path d="M3 6.5h7" stroke="#6e7072" stroke-width="1"/></svg><svg class="ic" style="left:70px;top:186px" width="13" height="17" viewBox="0 0 13 17"><path d="M0.5 16.5h12V6.8L6.5 1 0.5 6.8z" fill="#2b2b2b" stroke="#636567" stroke-width="1"/><path d="M3 10.5h7" stroke="#6e7072" stroke-width="1"/></svg><svg class="ic" style="left:70px;top:268px" width="13" height="17" viewBox="0 0 13 17"><path d="M0.5 0.5h12v9.7L6.5 16 0.5 10.2z" fill="#2b2b2b" stroke="#636567" stroke-width="1"/><path d="M3 6.5h7" stroke="#6e7072" stroke-width="1"/></svg><div class="abs" style="left:80px;top:89px;width:527px;height:84px;border:3px solid #ff1e10;border-radius:3px"></div></div>
<div id="crumb"></div>
<div class="abs" style="left:473px;top:605px;width:1100px;height:1px;background:#3a3c3e"></div>
<div id="term"><div class="abs" style="left:0;top:0;width:1573px;height:1px;background:#2f3133"></div><div class="abs" style="left:0;top:1px;width:1573px;height:25px;background:#3c3f41"></div><div class="abs" style="left:0;top:26px;width:1573px;height:1px;background:#323232"></div><span class="t" style="left:6px;top:3px;line-height:21px"><span style="letter-spacing:0.047px">Terminal</span></span><div class="abs" style="left:0;top:27px;width:27px;height:227px;background:#3c3f41"></div><svg class="ic" style="left:7.9px;top:37.2px" width="10.6" height="10.6" viewBox="0 0 10.6 10.6"><path d="M5.3 0v10.6M0 5.3h10.6" stroke="#c0c0c0" stroke-width="1.9"/></svg><svg class="ic" style="left:8.2px;top:63.4px" width="9.6" height="9.6" viewBox="0 0 9.6 9.6"><path d="M0.8 0.8l8 8M8.8 0.8L0.8 8.8" stroke="#c0c0c0" stroke-width="2"/></svg><div class="gs abs" style="left:0;top:0;width:1573px;height:254px"><div class="tl" style="top:30px">D:\Python\Pycharm\work_dir\PyTorch&gt;cd D:\Python\Pycharm\work_dir\PyTorch\Work_Dir\maskrcnn-benchmark-master\demo</div><div class="tl" style="top:90px">D:\Python\Pycharm\work_dir\PyTorch\Work_Dir\maskrcnn-benchmark-master\demo&gt;python webcam.py --min-image-size 300 MODEL.DEVICE cpu</div><div class="tl" style="top:120px">Traceback (most recent call last):</div><div class="tl" style="top:150px">  File "webcam.py", line 5, in &lt;module&gt;</div><div class="tl" style="top:180px">    from maskrcnn_benchmark.config import cfg</div><div class="tl" style="top:210px">ModuleNotFoundError: No module named 'maskrcnn_benchmark'</div></div><div class="abs" style="left:23px;top:152px;width:714px;height:92px;border:3px solid #ff1e10;border-radius:3px"></div><div class="abs" style="left:1561px;top:144px;width:14px;height:76px;background:#4e5052;box-shadow:-1px 1px 3px rgba(0,0,0,.45)"></div><div class="abs" style="left:1561px;top:232px;width:14px;height:30px;background:#4e5052;box-shadow:-1px 1px 3px rgba(0,0,0,.45)"></div><div class="abs" style="left:1572px;top:155px;width:2px;height:6px;background:#d9534f"></div><div class="abs" style="left:1572px;top:248px;width:2px;height:6px;background:#3b8fd0"></div></div>
</body></html>
